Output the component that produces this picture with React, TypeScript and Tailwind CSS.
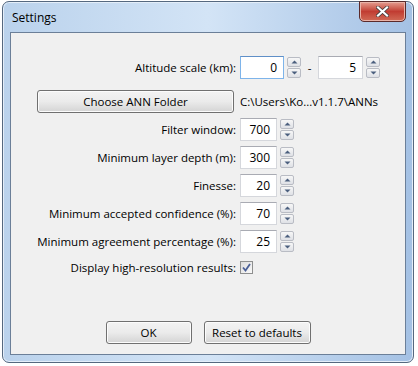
import React from "react";

function Arrow({ up }: { up: boolean }) {
  return (
    <svg width="7" height="4" viewBox="0 0 7 4" className="block">
      {up ? (
        <path d="M0.5 3.5 L3.5 0.5 L6.5 3.5 Z" fill="#4b5f7e" />
      ) : (
        <path d="M0.5 0.5 L3.5 3.5 L6.5 0.5 Z" fill="#4b5f7e" />
      )}
    </svg>
  );
}

function Spinner() {
  return (
    <div className="flex flex-col gap-[1px]">
      <div className="w-[14px] h-[10px] flex items-center justify-center border border-[#b9bcc4] rounded-[2px] bg-gradient-to-b from-[#f7f7f7] to-[#dfe1e6]">
        <Arrow up />
      </div>
      <div className="w-[14px] h-[10px] flex items-center justify-center border border-[#b9bcc4] rounded-[2px] bg-gradient-to-b from-[#f7f7f7] to-[#dfe1e6]">
        <Arrow up={false} />
      </div>
    </div>
  );
}

function SpinBox({ value, width = "w-[37px]", focused = false }: { value: string; width?: string; focused?: boolean }) {
  return (
    <div className="flex items-center gap-[3px]">
      <div
        className={
          "h-[23px] bg-white flex items-center justify-end pr-[6px] border text-[12px] " +
          width +
          (focused ? " border-[#7eb4ea] border-t-[#5f8fc7]" : " border-[#d5d7dc] border-t-[#a9abb3]")
        }
      >
        {value}
      </div>
      <Spinner />
    </div>
  );
}

function WinButton({ children, className }: { children: React.ReactNode; className: string }) {
  return (
    <div
      className={
        "h-[23px] flex items-center justify-center rounded-[3px] border border-[#707070] bg-gradient-to-b from-[#f3f3f3] via-[#ebebeb] to-[#d4d4d4] shadow-[inset_0_0_0_1px_#fcfcfc] " +
        className
      }
    >
      {children}
    </div>
  );
}

const rows: [string, string][] = [
  ["Filter window:", "700"],
  ["Minimum layer depth (m):", "300"],
  ["Finesse:", "20"],
  ["Minimum accepted confidence (%):", "70"],
  ["Minimum agreement percentage (%):", "25"],
];

export default function App() {
  return (
    <div className="w-[418px] h-[366px] bg-white pt-[1px] pl-[2px] text-[11.5px] text-black" style={{ fontFamily: '"Open Sans", "Noto Sans", sans-serif' }}>
      <div className="relative w-[412px] h-[362px] rounded-[7px] border border-[#55687f] bg-gradient-to-r from-[#bad2ec] via-[#d3e4f6] to-[#a4c1e4] flex flex-col shadow-[inset_0_0_0_1px_#e4eef9]">
        {/* Title bar */}
        <div className="h-[30px] flex items-center pl-[9px] pt-[1px] text-[12px]">Settings</div>
        <div className="absolute top-[-1px] right-[7px] w-[47px] h-[21px] rounded-b-[5px] border border-[#5b2a2a] bg-gradient-to-b from-[#e39c90] via-[#c13c32] to-[#d06a56] flex items-center justify-center shadow-[inset_0_0_0_1px_#e9b3a8]">
          <svg width="13" height="11" viewBox="0 0 13 11">
            <path d="M2 1.5 L11 9.5 M11 1.5 L2 9.5" stroke="#3a3a3a" strokeWidth="3.6" strokeLinecap="square" />
            <path d="M2 1.5 L11 9.5 M11 1.5 L2 9.5" stroke="#ffffff" strokeWidth="2.2" strokeLinecap="square" />
          </svg>
        </div>

        {/* Client area */}
        <div className="flex-1 mx-[7px] mb-[7px] border border-[#6b7f98] bg-[#f0f0f0] flex flex-col">
          <div className="grid grid-cols-[225px_1fr] gap-x-[4px] pt-[23px] items-center">
            <div className="text-right">Altitude scale (km):</div>
            <div className="flex items-center">
              <SpinBox value="0" width="w-[44px]" focused />
              <span className="w-[17px] text-center">-</span>
              <SpinBox value="5" width="w-[45px]" />
            </div>

            <div className="pl-[26px] pr-[2px] mt-[11px]">
              <WinButton className="w-full h-[23px]">Choose ANN Folder</WinButton>
            </div>
            <div className="mt-[11px]">C:\Users\Ko...v1.1.7\ANNs</div>

            {rows.map(([label, value]) => (
              <React.Fragment key={label}>
                <div className="text-right mt-[5px]">{label}</div>
                <div className="mt-[5px]">
                  <SpinBox value={value} />
                </div>
              </React.Fragment>
            ))}

            <div className="text-right mt-[6px]">Display high-resolution results:</div>
            <div className="mt-[6px] flex items-center h-[14px]">
              <div className="w-[13px] h-[13px] border border-[#8e8f8f] bg-gradient-to-br from-[#dcdcdc] to-[#fafafa] flex items-center justify-center">
                <svg width="9" height="9" viewBox="0 0 9 9">
                  <path d="M1 4.5 L3.5 7.5 L8 1" stroke="#4a5f97" strokeWidth="1.8" fill="none" />
                </svg>
              </div>
            </div>
          </div>

          <div className="mt-auto mb-[10px] flex justify-center gap-[12px]">
            <WinButton className="w-[86px]">OK</WinButton>
            <WinButton className="w-[107px]">Reset to defaults</WinButton>
          </div>
        </div>
      </div>
    </div>
  );
}
